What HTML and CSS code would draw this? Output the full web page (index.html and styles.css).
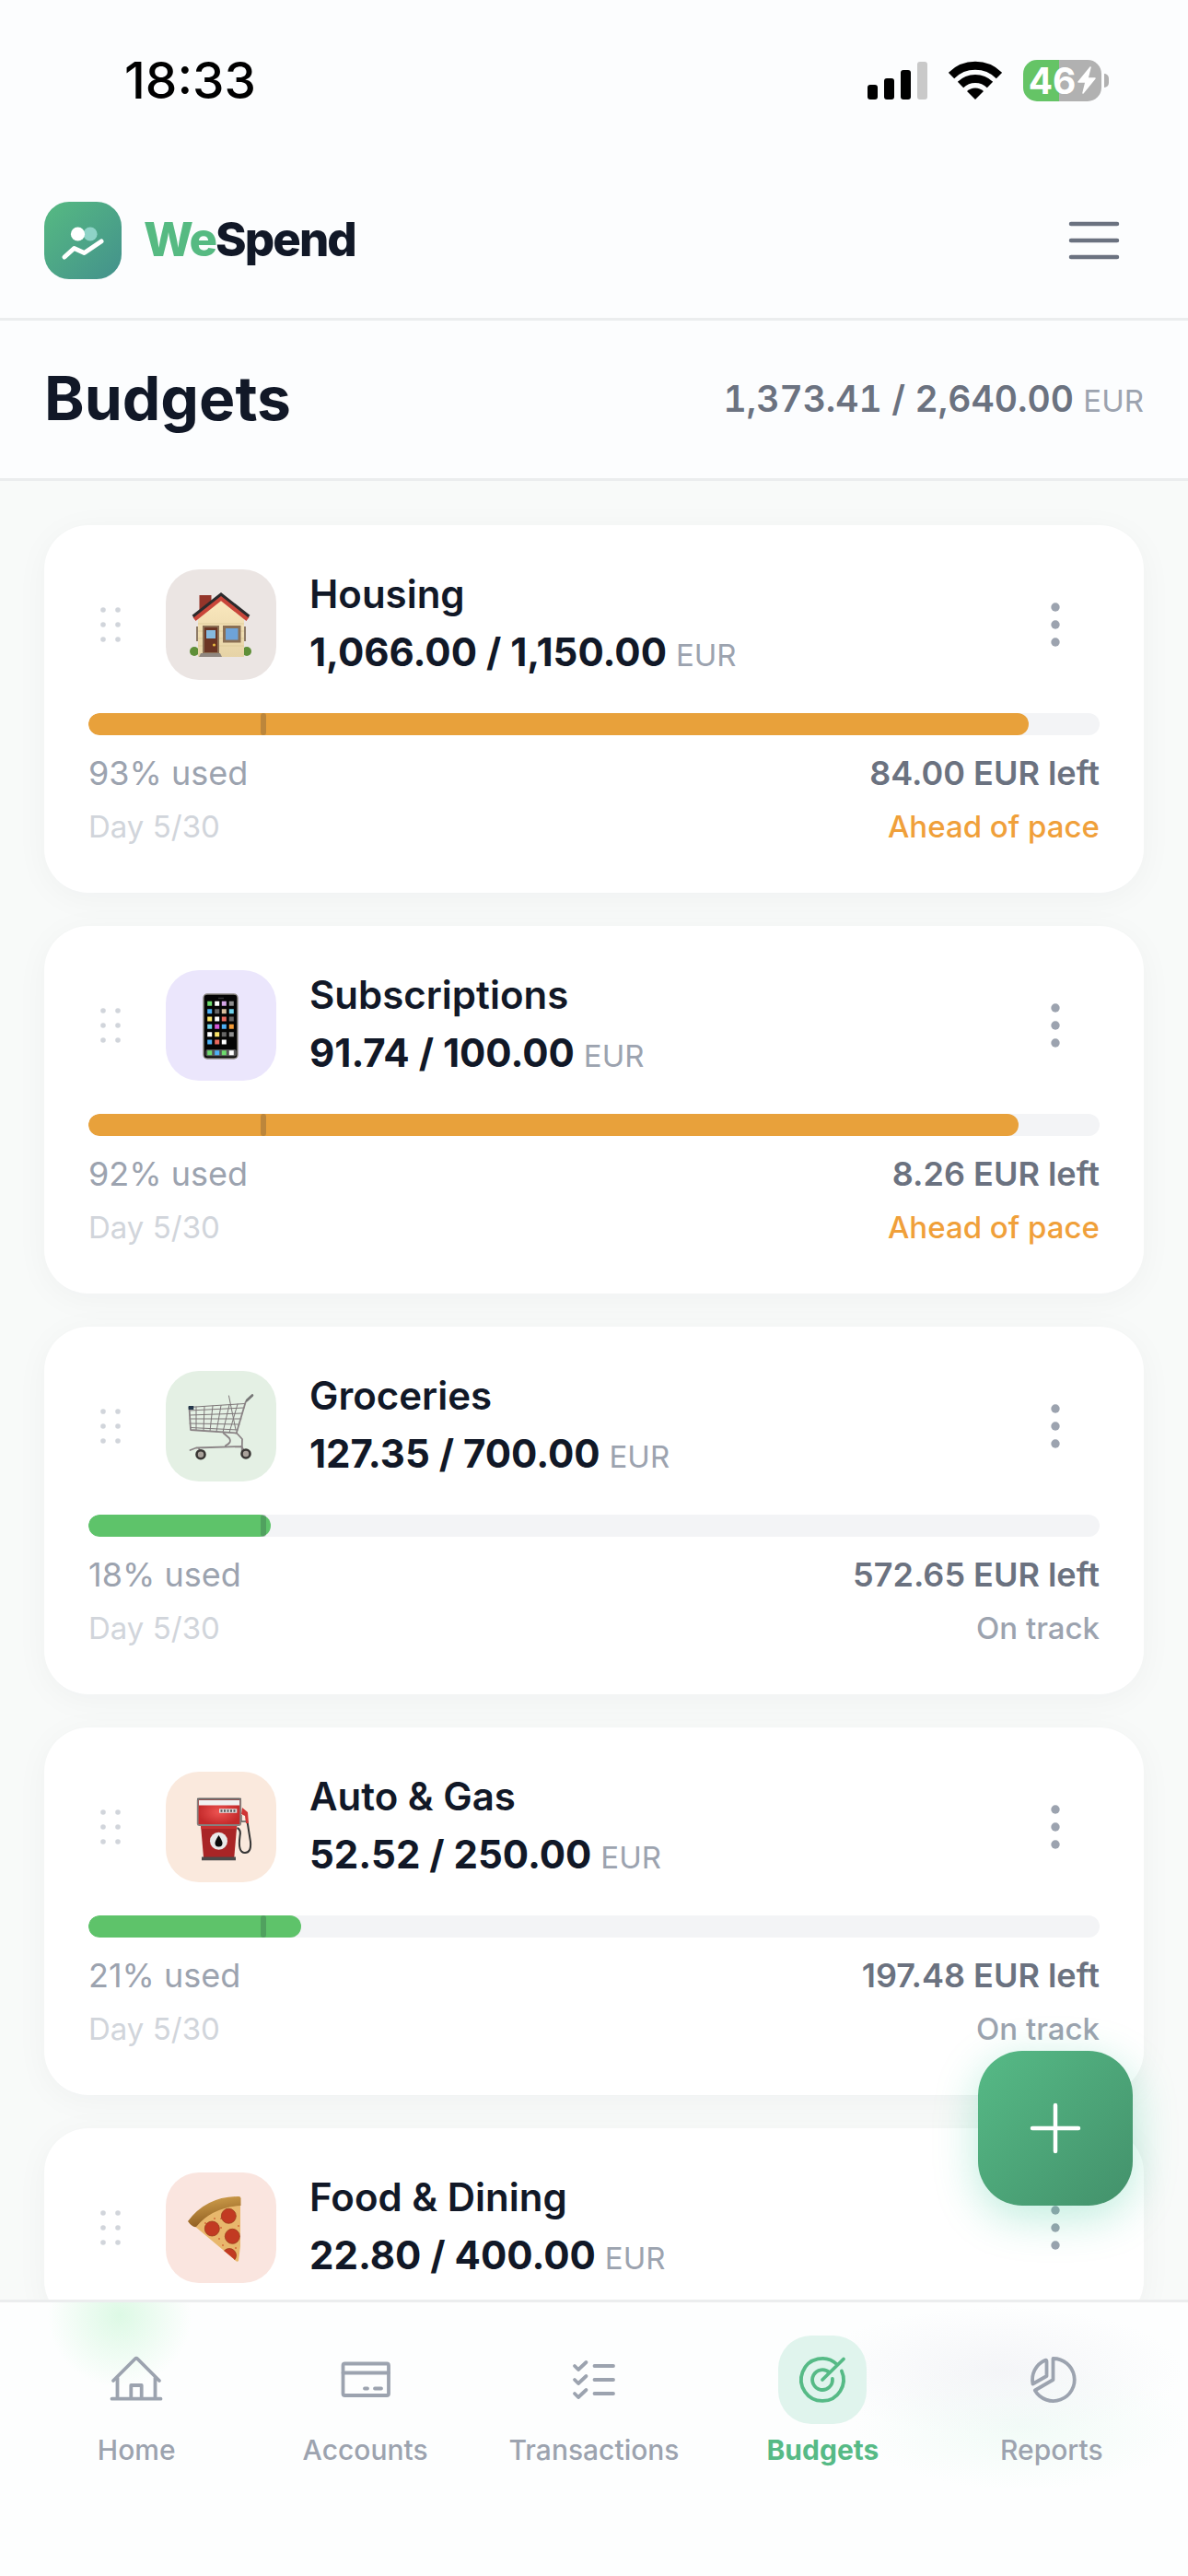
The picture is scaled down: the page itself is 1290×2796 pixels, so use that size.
FILE: index.html
```html
<!DOCTYPE html>
<html lang="en">
<head>
<meta charset="utf-8">
<meta name="viewport" content="width=device-width, initial-scale=1">
<title>WeSpend – Budgets</title>
<link rel="stylesheet" href="styles.css">
</head>
<body>
<svg class="sprite" aria-hidden="true">
  <symbol id="grip" viewBox="0 0 48 48">
    <circle cx="16" cy="8" r="2.800"/><circle cx="32" cy="8" r="2.800"/>
    <circle cx="16" cy="24" r="2.800"/><circle cx="32" cy="24" r="2.800"/>
    <circle cx="16" cy="40" r="2.800"/><circle cx="32" cy="40" r="2.800"/>
  </symbol>
  <symbol id="more" viewBox="0 0 96 96">
    <circle cx="48" cy="29" r="4.700"/><circle cx="48" cy="48" r="4.700"/><circle cx="48" cy="67" r="4.700"/>
  </symbol>
</svg>
<div class="app">
  <header class="top">
    <div class="status">
      <span class="time">18:33</span>
      <div class="signals">
        <svg width="65" height="42" viewBox="0 0 65 42" aria-hidden="true">
          <rect x="0" y="26" width="11" height="16" rx="3"/><rect x="18" y="19" width="11" height="23" rx="3"/>
          <rect x="36" y="10" width="11" height="32" rx="3"/><rect x="54" y="1" width="11" height="41" rx="3" fill="#c9c9c9"/>
        </svg>
        <svg class="wifi" width="58" height="42" viewBox="0 0 58 42" aria-hidden="true">
          <path d="M3 16A36.800 36.800 0 0 1 55 16" fill="none" stroke="#000" stroke-width="9"/>
          <path d="M13 26A22.800 22.800 0 0 1 45 26" fill="none" stroke="#000" stroke-width="9"/>
          <path d="M29 42L20 33A13 13 0 0 1 38 33Z"/>
        </svg>
        <div class="battery">
          <span class="battery-body">46<svg width="20" height="30" viewBox="0 0 20 30" aria-hidden="true"><path d="M14 1L1 17H9L6 29L19 13H11Z" fill="#fff" stroke="#fff" stroke-width="1.500" stroke-linejoin="round"/></svg></span>
          <span class="battery-cap"></span>
        </div>
      </div>
    </div>
    <div class="brand-row">
      <a class="brand" href="#">
        <svg width="84" height="84" viewBox="0 0 84 84" aria-hidden="true">
          <defs><linearGradient id="lg" x1="0" y1="0" x2="1" y2="1"><stop offset="0" stop-color="#56ba82"/><stop offset="1" stop-color="#43918c"/></linearGradient></defs>
          <rect width="84" height="84" rx="27" fill="url(#lg)"/>
          <circle cx="50" cy="35" r="7.600" fill="#8ed3c7"/><circle cx="36.500" cy="35" r="7.600" fill="#fff"/>
          <path d="M22 60L32.500 50.500L43.500 55.500L62 43" fill="none" stroke="#fff" stroke-width="5" stroke-linecap="round" stroke-linejoin="round"/>
        </svg>
        <span class="wordmark"><span class="we">We</span>Spend</span>
      </a>
      <button class="menu" type="button" aria-label="Menu">
        <svg width="60" height="60" viewBox="0 0 60 60"><path d="M5 12H55M5 30H55M5 48H55" stroke="#6b7280" stroke-width="4.500" stroke-linecap="round"/></svg>
      </button>
    </div>
  </header>
  <div class="title-row">
    <h1>Budgets</h1>
    <p class="total">1,373.41 / 2,640.00 <span class="cur">EUR</span></p>
  </div>
  <main class="list">
    <article class="card">
      <div class="head">
        <button class="grip" type="button" aria-label="Reorder Housing"><svg width="48" height="48"><use href="#grip"/></svg></button>
        <svg class="tile housing" viewBox="0 0 120 120" aria-hidden="true">
          <defs><linearGradient id="wall" x1="0" y1="0" x2="0" y2="1"><stop offset="0" stop-color="#fbe9bf"/><stop offset="1" stop-color="#e6d3a6"/></linearGradient></defs>
          <circle cx="31" cy="89" r="5" fill="#5f8f38"/><circle cx="88" cy="89" r="5" fill="#5f8f38"/>
          <path d="M33 62H36V78H33ZM85 62H87V78H85Z" fill="#8d7a66"/>
          <path d="M36.500 28H49.500V45H36.500Z" fill="#94352a"/>
          <path d="M35 50L60 30L85 50V95H35Z" fill="url(#wall)"/>
          <path d="M35 59H85M35 67H85M35 75H85M35 83H85" stroke="#dcc898" stroke-width="0.800"/>
          <path d="M31 54L60 31L89 54" fill="none" stroke="#c9463a" stroke-width="5"/>
          <path d="M29.500 51L60 27L90.500 51" fill="none" stroke="#2b2a2c" stroke-width="3"/>
          <path d="M41 62H57V91H41Z" fill="#6b3524" stroke="#8a6f54" stroke-width="2"/>
          <path d="M44 66H54V75H44Z" fill="#86b9de"/><circle cx="52.500" cy="82" r="1.600" fill="#e8b840"/>
          <path d="M63.500 62.500H80V78H63.500Z" fill="#6ea3d8" stroke="#8a6f54" stroke-width="3"/>
          <path d="M38 91H59L61 95H36Z" fill="#8f8780"/>
        </svg>
        <div class="info"><h2>Housing</h2><p class="amount">1,066.00 / 1,150.00 <span class="cur">EUR</span></p></div>
        <button class="more" type="button" aria-label="Housing options"><svg width="96" height="96"><use href="#more"/></svg></button>
      </div>
      <div class="bar" role="progressbar" aria-label="Housing" aria-valuenow="93" aria-valuemin="0" aria-valuemax="100"><div class="fill warn" style="width:93%"></div><span class="mark"></span></div>
      <div class="used"><span>93% used</span><strong>84.00 EUR left</strong></div>
      <div class="pace"><span>Day 5/30</span><em class="ahead">Ahead of pace</em></div>
    </article>

    <article class="card">
      <div class="head">
        <button class="grip" type="button" aria-label="Reorder Subscriptions"><svg width="48" height="48"><use href="#grip"/></svg></button>
        <svg class="tile subs" viewBox="0 0 120 120" aria-hidden="true">
          <rect x="41" y="26" width="37" height="70" rx="4" fill="#050505" stroke="#8b8781" stroke-width="1.400"/>
          <path d="M57 30.500H63" stroke="#333" stroke-width="1.500"/>
          <rect x="43.300" y="86" width="33.400" height="7.500" rx="2" fill="#555"/>
          <g stroke-width="5" fill="none">
            <path stroke="#6ddb6d" d="M45.200 36.300h5M45.200 89.700h5M60.800 89.700h5"/>
            <path stroke="#fff" d="M53.200 36.300h5M53.200 53h5M45.200 69.700h5M60.800 78h5M68.800 89.700h5"/>
            <path stroke="#d3a4e6" d="M60.800 36.300h5"/>
            <path stroke="#8f8f8f" d="M68.800 36.300h5M68.800 69.700h5"/>
            <path stroke="#4eb0f5" d="M45.200 44.700h5M60.800 61.300h5M45.200 78h5M53.200 89.700h5"/>
            <path stroke="#666" d="M53.200 44.700h5M68.800 53h5M60.800 69.700h5"/>
            <path stroke="#d9bf9f" d="M60.800 44.700h5"/>
            <path stroke="#6fd2ea" d="M68.800 44.700h5M45.200 61.300h5"/>
            <path stroke="#fae36a" d="M45.200 53h5M53.200 69.700h5"/>
            <path stroke="#ea6a5e" d="M60.800 53h5M53.200 78h5"/>
            <path stroke="#d458d8" d="M53.200 61.300h5"/>
            <path stroke="#f39a36" d="M68.800 61.300h5"/>
          </g>
        </svg>
        <div class="info"><h2>Subscriptions</h2><p class="amount">91.74 / 100.00 <span class="cur">EUR</span></p></div>
        <button class="more" type="button" aria-label="Subscriptions options"><svg width="96" height="96"><use href="#more"/></svg></button>
      </div>
      <div class="bar" role="progressbar" aria-label="Subscriptions" aria-valuenow="92" aria-valuemin="0" aria-valuemax="100"><div class="fill warn" style="width:92%"></div><span class="mark"></span></div>
      <div class="used"><span>92% used</span><strong>8.26 EUR left</strong></div>
      <div class="pace"><span>Day 5/30</span><em class="ahead">Ahead of pace</em></div>
    </article>

    <article class="card">
      <div class="head">
        <button class="grip" type="button" aria-label="Reorder Groceries"><svg width="48" height="48"><use href="#grip"/></svg></button>
        <svg class="tile groceries" viewBox="0 0 120 120" aria-hidden="true">
          <g fill="none" stroke="#7d7678" stroke-width="1" stroke-linecap="round">
            <path d="M25 39.500L86 35.500M25.500 43L85 40M26 48L83.500 46M26 52H82M26 57L80 58M26.500 61.500L78 64"/>
            <path d="M33 39V64.500M42 38.500L41 65M51 38L48 65.500M60 37.500L55 66M69 37L62 66.500M78 36L69 67M68.500 27L76 64"/>
          </g>
          <g fill="none" stroke="#8a8385" stroke-width="1.800" stroke-linecap="round" stroke-linejoin="round">
            <path d="M94 26.500L86.700 33.700L76.700 67.500L27 64L25.500 40"/>
            <path d="M62.700 67.500L69 73Q72 78 65 81M77 67.500L83 74L82.700 87M26.500 86L33 83.500L83 82"/>
            <path d="M36 84L38 90M82 82L87 89"/>
          </g>
          <path d="M24.700 38H30.300V42H24.700Z" fill="#25384c"/><path d="M94 26.500L88 32" stroke="#777" stroke-width="2.600" stroke-linecap="round"/>
          <circle cx="38" cy="90.700" r="4.500" fill="#aaa29b" stroke="#393634" stroke-width="2.600"/><circle cx="87" cy="90" r="4.500" fill="#aaa29b" stroke="#393634" stroke-width="2.600"/>
        </svg>
        <div class="info"><h2>Groceries</h2><p class="amount">127.35 / 700.00 <span class="cur">EUR</span></p></div>
        <button class="more" type="button" aria-label="Groceries options"><svg width="96" height="96"><use href="#more"/></svg></button>
      </div>
      <div class="bar" role="progressbar" aria-label="Groceries" aria-valuenow="18" aria-valuemin="0" aria-valuemax="100"><div class="fill good" style="width:18%"></div><span class="mark"></span></div>
      <div class="used"><span>18% used</span><strong>572.65 EUR left</strong></div>
      <div class="pace"><span>Day 5/30</span><em>On track</em></div>
    </article>

    <article class="card">
      <div class="head">
        <button class="grip" type="button" aria-label="Reorder Auto &amp; Gas"><svg width="48" height="48"><use href="#grip"/></svg></button>
        <svg class="tile auto" viewBox="0 0 120 120" aria-hidden="true">
          <defs><radialGradient id="pump"><stop offset="0" stop-color="#ee5452"/><stop offset="1" stop-color="#c42a2b"/></radialGradient></defs>
          <path d="M77.500 61Q82 63 80.500 70Q78 88 86 88Q93 88 92 76L88.500 54" fill="none" stroke="#353535" stroke-width="2"/>
          <path d="M83 39L89 44L90 56H87L86 48L82 46Z" fill="#cf3535"/><path d="M82 47V54H87" fill="none" stroke="#555" stroke-width="1.300"/>
          <path d="M38 58H77.300L74.300 93H41Z" fill="#a92526"/>
          <path d="M38 58H77.300L77 62H38.500Z" fill="#c63030"/>
          <rect x="34.700" y="29.500" width="46.500" height="28.500" rx="1.500" fill="url(#pump)" stroke="#85817f" stroke-width="1.800"/>
          <path d="M36 31H80V36.500H36Z" fill="#f1f1f1"/><path d="M34 29.500H82" stroke="#666" stroke-width="1.500"/>
          <path d="M58 40.300H77.300V44.700H58Z" fill="#ddd"/><path d="M59.500 42.500H76" stroke="#555" stroke-width="2.500" stroke-dasharray="2 1.500"/>
          <circle cx="57.500" cy="75.300" r="9.500" fill="#e9e9e9"/><path d="M57.500 69Q61.500 75 61.500 77.500A4 4 0 0 1 53.500 77.500Q53.500 75 57.500 69Z" fill="#0a0a0a"/>
          <path d="M39 92.500H76V96.300H39Z" fill="#4b4949"/>
        </svg>
        <div class="info"><h2>Auto &amp; Gas</h2><p class="amount">52.52 / 250.00 <span class="cur">EUR</span></p></div>
        <button class="more" type="button" aria-label="Auto &amp; Gas options"><svg width="96" height="96"><use href="#more"/></svg></button>
      </div>
      <div class="bar" role="progressbar" aria-label="Auto &amp; Gas" aria-valuenow="21" aria-valuemin="0" aria-valuemax="100"><div class="fill good" style="width:21%"></div><span class="mark"></span></div>
      <div class="used"><span>21% used</span><strong>197.48 EUR left</strong></div>
      <div class="pace"><span>Day 5/30</span><em>On track</em></div>
    </article>

    <article class="card">
      <div class="head">
        <button class="grip" type="button" aria-label="Reorder Food &amp; Dining"><svg width="48" height="48"><use href="#grip"/></svg></button>
        <svg class="tile food" viewBox="0 0 120 120" aria-hidden="true">
          <defs>
            <clipPath id="slice"><path d="M31 58Q50 36 81 35V80L79 96Q77 98 74 94Z"/></clipPath>
            <linearGradient id="crust" x1="0" y1="0" x2="0.300" y2="1"><stop offset="0" stop-color="#d8a852"/><stop offset="1" stop-color="#8f5d20"/></linearGradient>
          </defs>
          <path d="M31 58Q50 36 81 35V80L79 96Q77 98 74 94Z" fill="#e8b76c"/>
          <g clip-path="url(#slice)">
            <g fill="#d4683a"><circle cx="43" cy="55" r="1"/><circle cx="58" cy="72" r="1"/><circle cx="60" cy="50" r="1"/><circle cx="62" cy="79" r="1"/><circle cx="79" cy="58" r="1"/><circle cx="53" cy="50" r="1"/><circle cx="76" cy="82" r="1"/><circle cx="60" cy="60" r="1"/></g>
            <g fill="#c23a22" stroke="#9c3b1c" stroke-width="0.800"><circle cx="50.300" cy="61" r="8"/><circle cx="68.300" cy="47.300" r="8"/><circle cx="72.300" cy="69.300" r="8"/><circle cx="69" cy="90" r="7.500"/></g>
          </g>
          <path d="M24 53Q44 26 79 26Q82 26 81.500 29V36Q50 38 33 59Q29 60 24 53Z" fill="url(#crust)"/>
        </svg>
        <div class="info"><h2>Food &amp; Dining</h2><p class="amount">22.80 / 400.00 <span class="cur">EUR</span></p></div>
        <button class="more" type="button" aria-label="Food &amp; Dining options"><svg width="96" height="96"><use href="#more"/></svg></button>
      </div>
    </article>
  </main>

  <button class="fab" type="button" aria-label="Add budget">
    <svg width="60" height="60" viewBox="0 0 60 60"><path d="M30 5V55M5 30H55" stroke="#fff" stroke-width="4.500" stroke-linecap="round"/></svg>
  </button>

  <nav class="tabs" aria-label="Main">
    <a class="tab" href="#"><span class="icon"><svg width="60" height="60" viewBox="0 0 60 60"><path d="M5 31L28.500 7.500Q30 6 31.500 7.500L55 31M9.500 28V50.500M50.500 28V50.500M3.500 50.700H56.500M24.300 50V36H35.700V50"/></svg></span>Home</a>
    <a class="tab" href="#"><span class="icon"><svg width="60" height="60" viewBox="0 0 60 60"><rect x="5.500" y="12.500" width="49.500" height="34.500" rx="2"/><path d="M5.500 22.500H55M29 39.500H32M40 39.500H47"/></svg></span>Accounts</a>
    <a class="tab" href="#"><span class="icon"><svg width="60" height="60" viewBox="0 0 60 60"><path d="M9 15L13 19L21.500 11M9 30L13 34L21.500 26M9 45L13 49L21.500 41M30.500 15H51M30.500 30H51M30.500 45H51"/></svg></span>Transactions</a>
    <a class="tab active" href="#" aria-current="page"><span class="icon"><svg width="60" height="60" viewBox="0 0 60 60"><path d="M46 13.500A23 23 0 1 0 50.900 20.500M37.700 22.300A10.900 10.900 0 1 0 40.900 29M30 30L53 7.500"/></svg></span>Budgets</a>
    <a class="tab" href="#"><span class="icon"><svg width="60" height="60" viewBox="0 0 60 60"><path d="M31.500 7A23 23 0 1 1 11.800 41.500L31.500 30ZM22.500 9Q24.500 8 24.500 10V26L9.500 34.500A23 23 0 0 1 22.500 9Z"/></svg></span>Reports</a>
  </nav>
</div>
</body>
</html>
```
FILE: styles.css
```css
* { box-sizing: border-box; }

body {
  margin: 0;
  font-family: Inter, "Liberation Sans", sans-serif;
  color: #111827;
  background: #f8faf9;
}

h1, h2, p { margin: 0; }

button {
  display: flex;
  align-items: center;
  justify-content: center;
  padding: 0;
  border: 0;
  background: none;
}

a { color: inherit; text-decoration: none; }

.sprite { position: absolute; width: 0; height: 0; }

.app {
  position: relative;
  display: flex;
  flex-direction: column;
  height: 100vh;
}

.top, .title-row {
  flex: none;
  padding: 0 48px;
  border-bottom: 3px solid #ebedee;
  background: #fcfdfe;
}

/* status bar */
.status {
  display: flex;
  align-items: center;
  justify-content: space-between;
  height: 177px;
  padding: 0 38px 3px 87px;
}

.time { font-size: 55px; font-weight: 500; color: #000; }

.signals { display: flex; align-items: center; gap: 23px; }

.battery { display: flex; align-items: center; gap: 3px; }

.battery-body {
  display: flex;
  align-items: center;
  justify-content: center;
  gap: 2px;
  width: 85px;
  height: 45px;
  border-radius: 15px;
  background: linear-gradient(90deg, #65c466 46%, #b1b1b1 46%);
  color: #fff;
  font-size: 39px;
  font-weight: 700;
  line-height: 45px;
}

.battery-cap {
  width: 5px;
  height: 15px;
  border-radius: 0 5px 5px 0;
  background: #b1b1b1;
}

/* brand */
.brand-row {
  display: flex;
  align-items: center;
  justify-content: space-between;
  height: 168px;
}

.brand { display: flex; align-items: center; gap: 24px; }

.wordmark {
  padding-bottom: 3px;
  font-size: 51px;
  font-weight: 800;
  letter-spacing: -2px;
}

.we { color: #56ba82; }

.menu { width: 108px; height: 108px; }

/* page title */
.title-row {
  display: flex;
  align-items: center;
  justify-content: space-between;
  height: 174px;
  padding-bottom: 3px;
}

h1 { font-size: 66px; font-weight: 700; }

.total {
  font-size: 39px;
  font-weight: 600;
  font-variant-numeric: tabular-nums;
  color: #6b7280;
}

.cur { font-size: 33px; font-weight: 400; color: #9ca3af; }

/* budget cards */
.list {
  display: flex;
  flex: 1;
  flex-direction: column;
  gap: 36px;
  min-height: 0;
  padding: 48px 48px 0;
  overflow: hidden;
}

.card {
  flex: none;
  padding: 48px 48px 45px;
  border-radius: 48px;
  background: #fff;
  box-shadow: 0 6px 36px rgba(17, 24, 39, 0.04);
}

.head { display: flex; align-items: center; height: 120px; }

.grip { width: 48px; height: 48px; fill: #d1d5db; }

.tile {
  width: 120px;
  height: 120px;
  margin: 0 36px;
  border-radius: 36px;
}

.housing { background: #ebe5e3; }
.subs { background: #ebe6fc; }
.groceries { background: #e4f0e4; }
.auto { background: #fae9dd; }
.food { background: #fae5df; }

.info { flex: 1; }

h2, .amount { font-size: 42px; font-weight: 600; line-height: 63px; }

.amount { font-weight: 700; }

.more { width: 96px; height: 96px; fill: #9ca3af; }

.bar {
  position: relative;
  height: 24px;
  margin: 36px 0 12px;
  border-radius: 12px;
  background: #f3f4f6;
  overflow: hidden;
}

.fill { height: 24px; border-radius: 12px; }
.warn { background: #e8a13b; }
.good { background: #5ec36a; }

.mark {
  position: absolute;
  top: 0;
  left: 17%;
  width: 6px;
  height: 24px;
  border-radius: 3px;
  background: rgba(30, 41, 59, 0.22);
}

.used, .pace { display: flex; justify-content: space-between; }

.used { font-size: 36px; line-height: 59px; color: #9ca3af; }
.used strong { font-weight: 600; color: #6b7280; }

.pace { margin-top: 1px; font-size: 33px; line-height: 54px; color: #d1d5db; }
.pace em { font-style: normal; font-weight: 500; color: #9ca3af; }
.pace .ahead { color: #f0a03a; }

/* floating add button */
.fab {
  position: absolute;
  right: 60px;
  bottom: 402px;
  width: 168px;
  height: 168px;
  border-radius: 48px;
  background: linear-gradient(135deg, #56ba86, #43916b);
  box-shadow: 0 12px 48px rgba(16, 185, 129, 0.28);
}

/* bottom tabs */
.tabs {
  display: flex;
  flex: none;
  height: 300px;
  padding: 36px 24px 0;
  border-top: 3px solid #ebedee;
  background:
    radial-gradient(circle at 130px 14px, #ddf9e5 0, rgba(221, 249, 229, 0) 78px),
    radial-gradient(ellipse 200px 70px at 84% 25%, rgba(243, 244, 247, 0.9), rgba(243, 244, 247, 0)),
    radial-gradient(ellipse 180px 70px at 86% 45%, rgba(240, 251, 246, 0.9), rgba(240, 251, 246, 0)),
    #fdfefe;
}

.tab {
  display: flex;
  flex: 1;
  flex-direction: column;
  align-items: center;
  gap: 9px;
  font-size: 30px;
  font-weight: 500;
  line-height: 39px;
  color: #9ca3af;
}

.icon {
  display: flex;
  align-items: center;
  justify-content: center;
  width: 96px;
  height: 96px;
  border-radius: 36px;
}

.icon svg {
  fill: none;
  stroke: currentColor;
  stroke-width: 3.8;
  stroke-linecap: round;
  stroke-linejoin: round;
}

.active { font-weight: 700; color: #56ba86; }
.active .icon { background: #e0f4ed; }
```
